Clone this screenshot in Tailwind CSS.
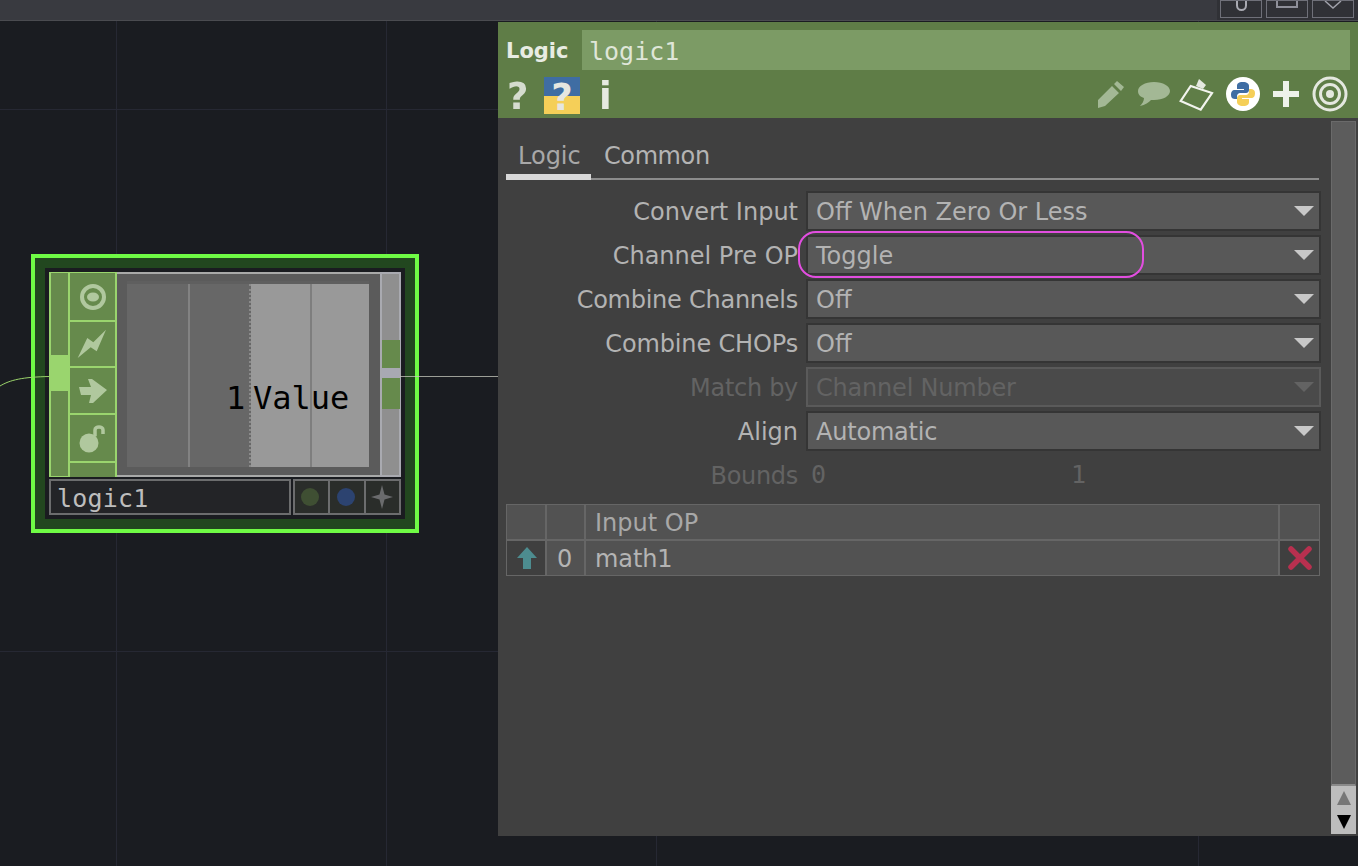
<!DOCTYPE html>
<html lang="en">
<head>
    <meta charset="UTF-8" />
    <title>logic1</title>
    <script src="https://cdn.jsdelivr.net/npm/@tailwindcss/browser@4"></script>
</head>
<body class="bg-[#1a1c21] overflow-hidden font-['DejaVu_Sans',sans-serif]">
<div class="relative w-[1358px] h-[866px] overflow-hidden">

    <!-- top bar -->
    <div class="h-[21px] bg-[#393a40] border-b border-[#4a4b50] flex justify-end">
        <div class="w-[141px] h-[20px] bg-[#303136] flex justify-end gap-[4px] pr-[4px]">
            <div class="w-[42px] h-[18px] border border-[#6f7079] flex justify-center overflow-hidden">
                <div class="w-[11px] h-[16px] -mt-[6px] border-2 border-[#a9aab2] rounded-full"></div>
            </div>
            <div class="w-[42px] h-[18px] border border-[#6f7079] flex justify-center overflow-hidden">
                <div class="w-[22px] h-[7px] border-2 border-t-0 border-[#8f909a]"></div>
            </div>
            <div class="w-[42px] h-[18px] border border-[#6f7079] flex justify-center overflow-hidden">
                <svg width="18" height="8" viewBox="0 0 18 8"><path d="M1 0 9 7 17 0" fill="none" stroke="#a0a1aa" stroke-width="1.5"/></svg>
            </div>
        </div>
    </div>

    <!-- network grid lines -->
    <div class="absolute left-[116px] top-[21px] w-px h-[845px] bg-[#262833]"></div>
    <div class="absolute left-[386px] top-[21px] w-px h-[845px] bg-[#262833]"></div>
    <div class="absolute left-[656px] top-[21px] w-px h-[845px] bg-[#262833]"></div>
    <div class="absolute left-[1198px] top-[21px] w-px h-[845px] bg-[#262833]"></div>
    <div class="absolute left-0 top-[109px] w-[498px] h-px bg-[#262833]"></div>
    <div class="absolute left-0 top-[651px] w-[498px] h-px bg-[#262833]"></div>

    <!-- selected node -->
    <div class="absolute left-[31px] top-[254px] w-[388px] h-[279px] border-4 border-[#6ffb45] bg-[#22471f] p-[10px]">
        <div class="w-[360px] h-[251px] bg-[#1a1c20] p-[4px]">
            <div class="flex h-[205px] w-[352px] bg-[#5b5b5b] border-y-2 border-[#a9aaa9]">
                <!-- input strip -->
                <div class="relative w-[21px] shrink-0 -my-[2px] bg-[#668a4c] border-x-2 border-y border-[#9ad56e]">
                    <div class="absolute -left-[2px] top-[82px] w-[21px] h-[36px] bg-[#9ad56e]"></div>
                </div>
                <!-- flag buttons -->
                <div class="w-[47px] shrink-0 -my-[2px] flex flex-col border-r-2 border-[#9ad56e] bg-[#9ad56e] gap-[2px] pt-px">
                    <div class="h-[47px] bg-[#668a4c] flex items-center justify-center">
                        <svg width="28" height="28" viewBox="0 0 28 28" class="opacity-90 blur-[0.5px]"><circle cx="14" cy="14" r="11" fill="none" stroke="#b9cfa7" stroke-width="4"/><ellipse cx="14" cy="14" rx="6" ry="4.5" fill="#b9cfa7"/></svg>
                    </div>
                    <div class="h-[44px] bg-[#668a4c] flex items-center justify-center">
                        <svg width="32" height="32" viewBox="0 0 32 32" class="opacity-90 blur-[0.5px]"><path d="M.7 30 10.3 10 16.3 14.3 29 1.7 19.7 23.3 13.7 19.3Z" fill="#b9cfa7"/></svg>
                    </div>
                    <div class="h-[45px] bg-[#668a4c] flex items-center justify-center">
                        <svg width="30" height="26" viewBox="0 0 30 26" class="opacity-90 blur-[0.5px]"><path d="M1 9H13L10 1H14L29 12 15 25H11L13 17H3Z" fill="#b9cfa7"/></svg>
                    </div>
                    <div class="h-[46px] bg-[#668a4c] flex items-center justify-center">
                        <svg width="28" height="30" viewBox="0 0 28 30" class="opacity-90 blur-[0.5px]"><circle cx="10" cy="20" r="9.5" fill="#b9cfa7"/><path d="M16 13V7C16 3 24 3 24 7V11" fill="none" stroke="#b9cfa7" stroke-width="3.5"/></svg>
                    </div>
                    <div class="flex-1 bg-[#668a4c]"></div>
                </div>
                <!-- viewer -->
                <div class="w-[263px] shrink-0 px-[10px] py-[7px]">
                    <div class="relative flex h-[186px] w-[242px] bg-[#5f5f5f] pt-[3px]">
                        <div class="relative w-[124px] h-full bg-[#676767] border-r-2 border-dotted border-[#8a8a8a]">
                            <div class="absolute left-[61px] top-0 w-[2px] h-full bg-[#828282]"></div>
                        </div>
                        <div class="relative flex-1 bg-[#999999]">
                            <div class="absolute left-[59px] top-0 w-[2px] h-full bg-[#7e7e7e]"></div>
                        </div>
                        <div class="absolute left-[99px] top-[97px] flex text-[32px] leading-[40px] text-black font-['DejaVu_Sans_Mono',monospace]">
                            <span class="w-[27px]">1</span><span>Value</span>
                        </div>
                    </div>
                </div>
                <!-- output strip -->
                <div class="w-[21px] shrink-0 -my-[2px] bg-[#8f8f8f] border-x-2 border-y-2 border-[#a9aab0] flex flex-col items-center pt-[66px]">
                    <div class="w-[18px] h-[28px] bg-[#668a4c]"></div>
                    <div class="w-full h-[10px] bg-[#a8a9b2]"></div>
                    <div class="w-[18px] h-[31px] bg-[#668a4c]"></div>
                </div>
            </div>
            <!-- node name row -->
            <div class="flex mt-[2px] w-[352px] h-[36px]">
                <div class="w-[242px] border-2 border-[#6c6d6e] bg-[#232427] text-[25px] leading-[36px] pl-[6px] tracking-[0.2px] text-[#bdbdbd] font-['DejaVu_Sans_Mono',monospace]">logic1</div>
                <div class="ml-[2px] flex-1 flex border-2 border-[#6c6d6e] bg-[#6c6d6e] gap-[2px]">
                    <div class="flex-1 bg-[#2a2d2a] flex items-center justify-center"><div class="w-[18px] h-[18px] -ml-[3px] rounded-full bg-[#3f4f33]"></div></div>
                    <div class="flex-1 bg-[#2a2d2a] flex items-center justify-center"><div class="w-[18px] h-[18px] -ml-[2px] rounded-full bg-[#2c4370]"></div></div>
                    <div class="flex-1 bg-[#2a2d2a] flex items-center justify-center">
                        <svg width="22" height="24" viewBox="0 0 22 24"><path d="M11 0 13.5 9.5 22 12 13.5 14.5 11 24 8.5 14.5 0 12 8.5 9.5Z" fill="#6a6b6d"/></svg>
                    </div>
                </div>
            </div>
        </div>
    </div>

    <!-- wires -->
    <svg class="absolute left-0 top-[370px]" width="500" height="20" viewBox="0 0 500 20">
        <path d="M0 16 C10 10 22 7 50 6.5" fill="none" stroke="#9bd46b" stroke-width="1"/>
        <path d="M400 6.5 H498" fill="none" stroke="#c8cabf" stroke-width="1" stroke-opacity=".75"/>
    </svg>

    <!-- parameter window -->
    <div class="absolute left-[498px] top-[22px] w-[860px] h-[814px] bg-[#404040] flex flex-col">
        <div class="h-[96px] bg-[#5f7d47] px-[8px] pt-[8px]">
            <div class="flex items-center h-[40px]">
                <div class="w-[76px] h-[40px] text-[21px] font-bold text-[#e8ece3] leading-[42px]">Logic</div>
                <div class="w-[768px] h-[40px] bg-[#7c9b65] pl-[7px] text-[25px] leading-[44px] text-[#dfe6d8] font-['DejaVu_Sans_Mono',monospace]">logic1</div>
            </div>
            <div class="flex items-center h-[48px] relative">
                <span class="w-[38px] h-[48px] pl-[1px] text-[37px] font-bold leading-[54px] text-[#d5dccf] blur-[0.4px]">?</span>
                <div class="relative w-[36px] h-[37px] mt-[3px] flex justify-center bg-[linear-gradient(#3f6da3_52%,#f5cf58_52%)]">
                    <span class="h-[37px] text-[37px] font-bold leading-[42px] text-[#e6e6e0]">?</span>
                </div>
                <span class="ml-[19px] h-[48px] text-[37px] font-bold leading-[54px] text-[#e6eae0] blur-[0.4px]">i</span>
                <div class="ml-auto flex items-center pr-[2px]">
                    <svg width="28" height="30" viewBox="0 0 28 30" class="blur-[0.5px]"><path d="M1 21 15 7 22 14 8 27 1 29ZM17 5 20 2 27 8 24 12Z" fill="#a3b895"/></svg>
                    <svg width="34" height="26" viewBox="0 0 34 26" class="ml-[12px] blur-[0.5px]"><path d="M17 1C8 1 1 5 1 10 1 14 4 16 7 17 7 20 5 23 3 25 8 24 12 21 14 19H17C26 19 33 15 33 10 33 5 26 1 17 1Z" fill="#a3b895"/></svg>
                    <svg width="36" height="36" viewBox="0 0 36 36" class="ml-[8px] blur-[0.3px]"><path d="M11.7 10 33 17 21.7 33.7 1.7 25Z" fill="none" stroke="#f2f4ee" stroke-width="2.2"/><path d="M20 3 27 9 24 13 17 10Z" fill="#e4e8df"/></svg>
                    <div class="ml-[11px] w-[34px] h-[34px] rounded-full bg-white flex items-center justify-center">
                        <svg width="26" height="26" viewBox="0 0 26 26"><path d="M13 1C8 1 7 3 7 5V8H14V9H5C2 9 1 11 1 14S3 18 5 18H7V15C7 13 9 12 10 12H16C18 12 19 10 19 9V5C19 3 17 1 13 1Z" fill="#3f6da3"/><path d="M13 25C18 25 19 23 19 21V18H12V17H21C24 17 25 15 25 12S23 8 21 8H19V11C19 13 17 14 16 14H10C8 14 7 16 7 17V21C7 23 9 25 13 25Z" fill="#f5cf58"/></svg>
                    </div>
                    <svg width="28" height="28" viewBox="0 0 28 28" class="ml-[12px] blur-[0.4px]"><path d="M14 1V27M1 14H27" stroke="#eef1ea" stroke-width="6"/></svg>
                    <svg width="36" height="36" viewBox="0 0 36 36" class="ml-[12px] blur-[0.4px]"><circle cx="18" cy="18" r="16" fill="none" stroke="#e4e8df" stroke-width="3"/><circle cx="18" cy="18" r="9.5" fill="none" stroke="#e4e8df" stroke-width="3"/><circle cx="18" cy="18" r="4" fill="#e4e8df"/></svg>
                </div>
            </div>
        </div>

        <div class="relative flex-1 pl-[8px] pt-[20px]">
            <!-- tabs -->
            <div class="w-[813px] h-[42px] flex text-[24px] leading-[36px] text-[#b4b4b4] border-b-2 border-[#8c8c8c]">
                <div class="w-[85px] h-[42px] pl-[12px] border-b-[6px] border-[#d8d8d8] text-[#a8a8a8]">Logic</div>
                <div class="pl-[13px] tracking-[-0.4px]">Common</div>
            </div>

            <!-- parameters -->
            <div class="mt-[11px] w-[815px] flex flex-col gap-[4px] text-[24px] text-[#b3b3b3]">
                <div class="flex h-[40px] items-center">
                    <div class="w-[292px] text-right mt-[2px]">Convert Input</div>
                    <div class="ml-[8px] flex-1 h-[40px] bg-[#585858] border-2 border-[#353535] flex items-center justify-between pl-[8px] pr-[5px]"><span class="mt-[2px]">Off When Zero Or Less</span><svg width="20" height="10" viewBox="0 0 20 10"><path d="M0 0H20L10 10Z" fill="#c8c8c8"/></svg></div>
                </div>
                <div class="flex h-[40px] items-center">
                    <div class="w-[292px] text-right mt-[2px]">Channel Pre OP</div>
                    <div class="ml-[8px] flex-1 h-[40px] bg-[#585858] border-2 border-[#353535] flex items-center justify-between pl-[8px] pr-[5px]"><span class="mt-[2px]">Toggle</span><svg width="20" height="10" viewBox="0 0 20 10"><path d="M0 0H20L10 10Z" fill="#c8c8c8"/></svg></div>
                </div>
                <div class="flex h-[40px] items-center">
                    <div class="w-[292px] text-right mt-[2px] tracking-[-0.25px]">Combine Channels</div>
                    <div class="ml-[8px] flex-1 h-[40px] bg-[#585858] border-2 border-[#353535] flex items-center justify-between pl-[8px] pr-[5px]"><span class="mt-[2px]">Off</span><svg width="20" height="10" viewBox="0 0 20 10"><path d="M0 0H20L10 10Z" fill="#c8c8c8"/></svg></div>
                </div>
                <div class="flex h-[40px] items-center">
                    <div class="w-[292px] text-right mt-[2px] tracking-[-0.15px]">Combine CHOPs</div>
                    <div class="ml-[8px] flex-1 h-[40px] bg-[#585858] border-2 border-[#353535] flex items-center justify-between pl-[8px] pr-[5px]"><span class="mt-[2px]">Off</span><svg width="20" height="10" viewBox="0 0 20 10"><path d="M0 0H20L10 10Z" fill="#c8c8c8"/></svg></div>
                </div>
                <div class="flex h-[40px] items-center text-[#636363]">
                    <div class="w-[292px] text-right mt-[2px] tracking-[-0.3px]">Match by</div>
                    <div class="ml-[8px] flex-1 h-[40px] bg-[#4a4a4a] border-2 border-[#5a5a5a] flex items-center justify-between pl-[8px] pr-[5px]"><span class="mt-[2px] tracking-[-0.2px]">Channel Number</span><svg width="20" height="10" viewBox="0 0 20 10"><path d="M0 0H20L10 10Z" fill="#636363"/></svg></div>
                </div>
                <div class="flex h-[40px] items-center">
                    <div class="w-[292px] text-right mt-[2px]">Align</div>
                    <div class="ml-[8px] flex-1 h-[40px] bg-[#585858] border-2 border-[#353535] flex items-center justify-between pl-[8px] pr-[5px]"><span class="mt-[2px] tracking-[-0.2px]">Automatic</span><svg width="20" height="10" viewBox="0 0 20 10"><path d="M0 0H20L10 10Z" fill="#c8c8c8"/></svg></div>
                </div>
                <div class="flex h-[40px] items-center text-[#636363]">
                    <div class="w-[292px] text-right mt-[2px] tracking-[-0.3px]">Bounds</div>
                    <div class="ml-[13px] w-[260px] font-['DejaVu_Sans_Mono',monospace] text-[25px]">0</div>
                    <div class="font-['DejaVu_Sans_Mono',monospace] text-[25px]">1</div>
                </div>
            </div>

            <!-- sequence table -->
            <div class="mt-[9px] w-[814px] grid grid-cols-[38px_37px_692px_39px] grid-rows-[34px_34px] bg-[#666666] border border-[#666666] gap-[2px] text-[24px] text-[#b4b4b4]">
                <div class="bg-[#525252]"></div>
                <div class="bg-[#525252]"></div>
                <div class="bg-[#525252] pl-[9px] leading-[36px] text-[#a8a8a8]">Input OP</div>
                <div class="bg-[#525252]"></div>
                <div class="bg-[#3f3f3f] flex items-center justify-center">
                    <svg width="22" height="24" viewBox="0 0 22 24" class="ml-[1px] blur-[0.4px]"><path d="M11 1 21 12H15V23H7V12H1Z" fill="#4d8c8f"/></svg>
                </div>
                <div class="bg-[#525252] pl-[10px] leading-[36px]">0</div>
                <div class="bg-[#525252] pl-[9px] leading-[36px] tracking-[-0.1px]">math1</div>
                <div class="bg-[#3f3f3f] flex items-center justify-center">
                    <svg width="24" height="24" viewBox="0 0 24 24" class="blur-[0.4px]"><path d="M3 3 21 21M21 3 3 21" stroke="#b8304f" stroke-width="5.5" stroke-linecap="round"/></svg>
                </div>
            </div>

            <!-- highlight annotation -->
            <div class="absolute left-[300px] top-[113px] w-[346px] h-[47px] border-2 border-[#e24ee0] rounded-[18px]"></div>

            <!-- scrollbar -->
            <div class="absolute right-[2px] top-[3px] bottom-[2px] w-[25px] flex flex-col">
                <div class="flex-1 bg-[#5c5c5c] border-x border-t border-[#6a6a6a] border-b-2 border-b-[#8a8a8a]"></div>
                <div class="h-[48px] bg-[#bdbdbd] flex flex-col items-center justify-center gap-[10px]">
                    <svg width="14" height="14" viewBox="0 0 14 14"><path d="M7 0 14 14H0Z" fill="#777777"/></svg>
                    <svg width="14" height="14" viewBox="0 0 14 14"><path d="M0 0H14L7 14Z" fill="#000000"/></svg>
                </div>
            </div>
        </div>
    </div>
</div>
</body>
</html>
